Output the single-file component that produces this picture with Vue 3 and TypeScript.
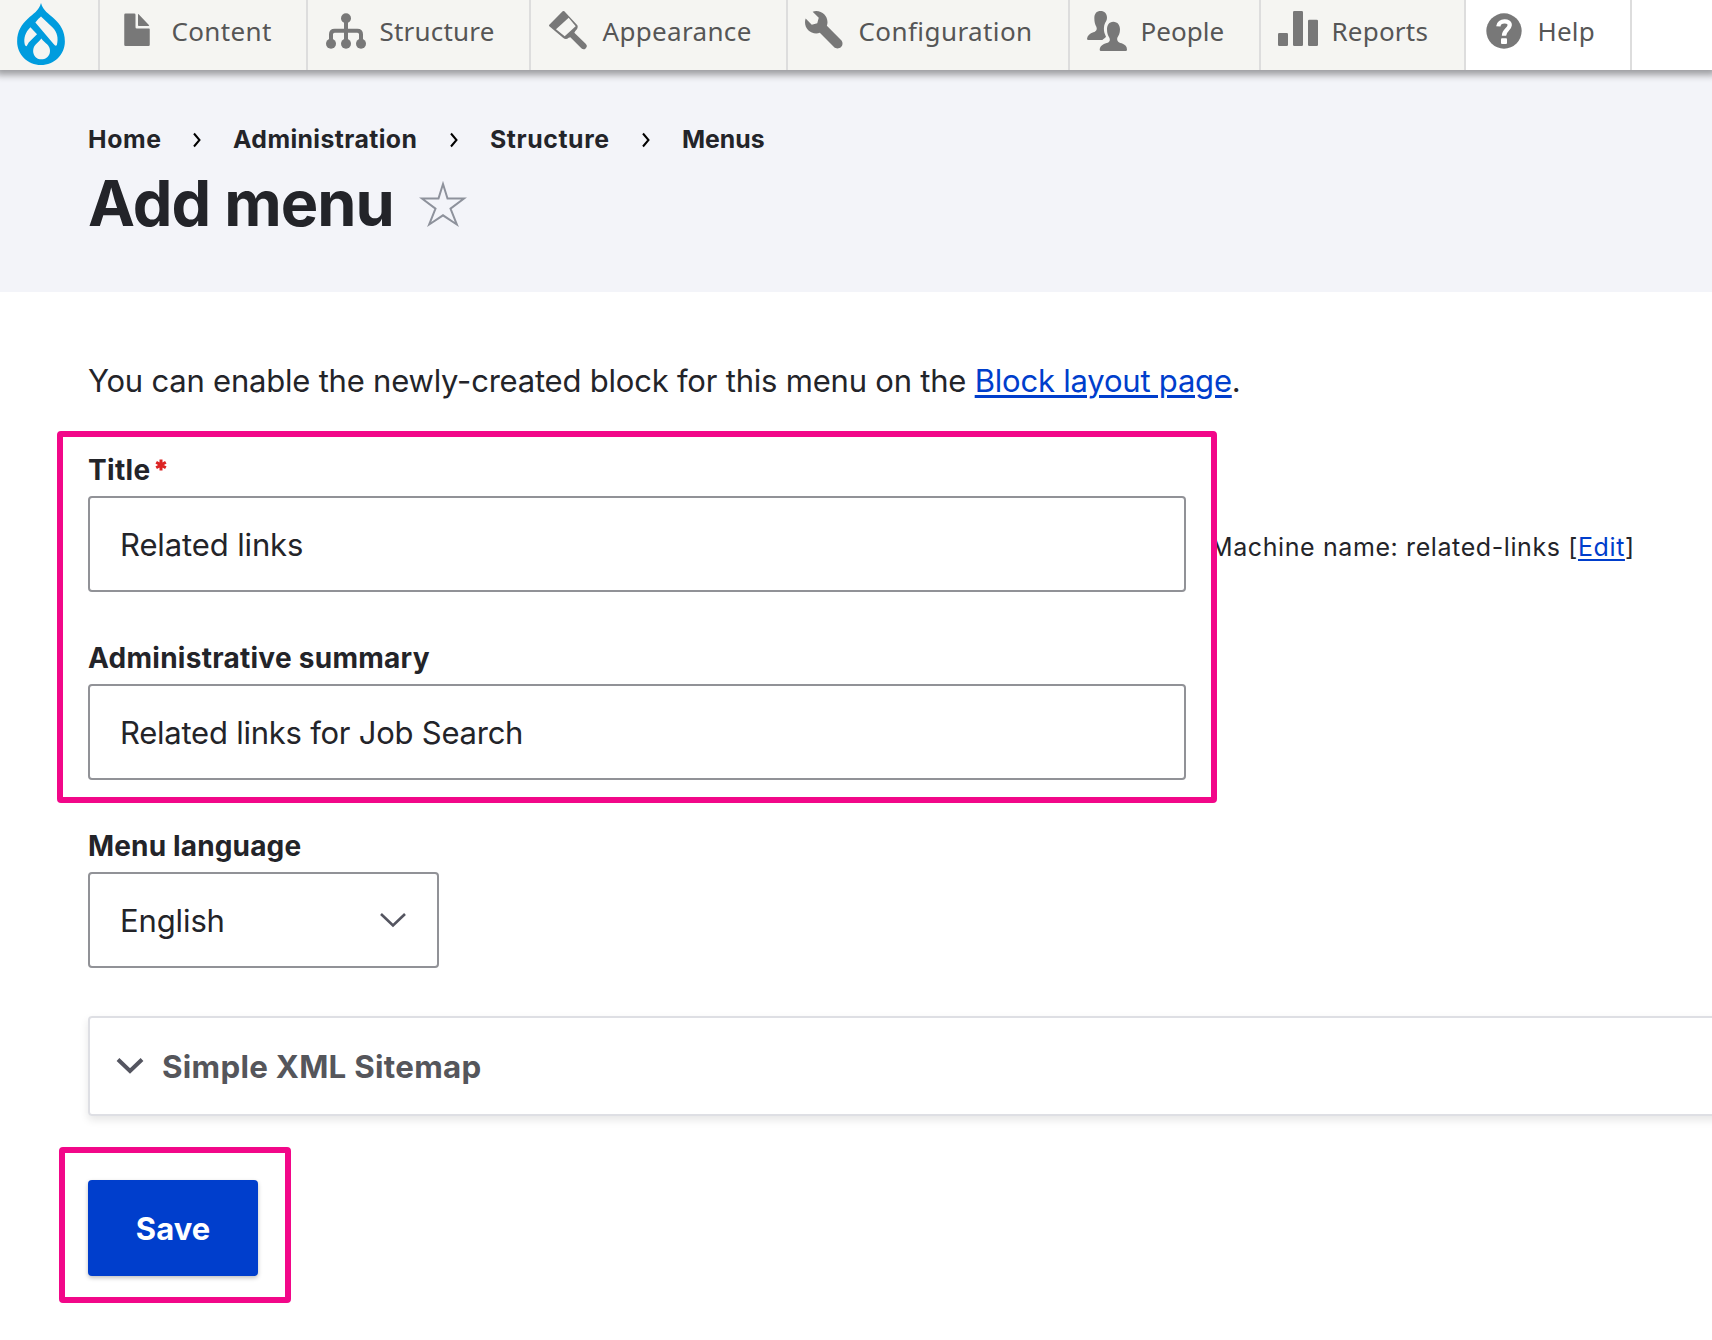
<script setup lang="ts">
import { ref } from 'vue'

type IconName = 'file' | 'tree' | 'brush' | 'wrench' | 'people' | 'bars' | 'help'

interface ToolbarItem {
  label: string
  icon: IconName
  width: number
  inset: number
  tracking: number
}

const toolbar: ToolbarItem[] = [
  { label: 'Content', icon: 'file', width: 208, inset: 18, tracking: 0.35 },
  { label: 'Structure', icon: 'tree', width: 223, inset: 18, tracking: 0.2 },
  { label: 'Appearance', icon: 'brush', width: 257, inset: 18, tracking: 0.33 },
  { label: 'Configuration', icon: 'wrench', width: 282, inset: 17, tracking: 0.42 },
  { label: 'People', icon: 'people', width: 191, inset: 17, tracking: 0.05 },
  { label: 'Reports', icon: 'bars', width: 205, inset: 17, tracking: 0.2 },
  { label: 'Help', icon: 'help', width: 166, inset: 18, tracking: 0.2 },
]

const crumbs = [
  { label: 'Home', width: 145, tracking: 0.6 },
  { label: 'Administration', width: 257, tracking: 0.4 },
  { label: 'Structure', width: 192, tracking: 0.6 },
  { label: 'Menus', width: 90, tracking: 0 },
]

const title = ref('Related links')
const summary = ref('Related links for Job Search')
</script>

<template>
  <div class="page">
    <nav class="toolbar">
      <a class="home">
        <svg class="logo" viewBox="51 8 144 187">
          <path
            fill="#009cde"
            fill-rule="evenodd"
            d="M123 8C129 32 147 40 162 55C181 73 195 92 195 124C195 164 163 195 123 195C83 195 51 164 51 124C51 92 65 73 84 55C99 40 117 32 123 8ZM123 49Q114 56 106 67L161 132Q168 140 171 134C176 114 172 96 158 82ZM91 81L111 102L86 127L80 138Q76 139 74 133C70 113 76 96 91 81ZM124 115C120 121 113 127 107 133C92 148 100 178 124 178C150 178 158 149 142 133C137 128 129 122 124 115Z"
          />
        </svg>
      </a>
      <a
        v-for="item in toolbar"
        :key="item.label"
        class="tab"
        :class="{ active: item.icon === 'help' }"
        :style="{ width: item.width + 'px', paddingLeft: item.inset + 'px' }"
      >
        <svg v-if="item.icon === 'file'" class="icon" viewBox="0 0 16 16">
          <path d="M12.5 7h-5A.5.5 0 0 1 7 6.500v-5a.5.5 0 0 0-.5-.5H3a.5.5 0 0 0-.5.5v12a.5.5 0 0 0 .5.5h9.200a.5.5 0 0 0 .5-.5v-6a.5.5 0 0 0-.2-.5zM8.400 6h3.800c.275 0 .34-.159.146-.354L8.353 1.354C8.158 1.159 8 1.225 8 1.500v4c0 .275.125.5.4.5z" />
        </svg>
        <svg v-else-if="item.icon === 'tree'" class="icon" viewBox="78 33 120 120">
          <circle cx="138" cy="55" r="15" />
          <circle cx="93" cy="131" r="15" />
          <circle cx="138" cy="131" r="15" />
          <circle cx="183" cy="131" r="15" />
          <path class="line" d="M138 55V131M93 131V103Q93 92 104 92H172Q183 92 183 103V131" />
        </svg>
        <svg v-else-if="item.icon === 'brush'" class="icon" viewBox="747 33 120 120">
          <path
            fill-rule="evenodd"
            d="M788 34Q790 32 793 34L832 76Q836 84 826 93L823 98L857 131A9.500 9.500 0 0 1 844 145L811 112L806 113Q798 121 789 113L748 79Q746 76 748 74ZM806 53L827 79L794 109L768 88Z"
          />
        </svg>
        <svg v-else-if="item.icon === 'wrench'" class="icon" viewBox="0 0 16 16">
          <path d="M14.416 11.586l-.01-.008v-.001l-5.656-5.656c.15-.449.252-.921.252-1.421 0-2.485-2.016-4.500-4.502-4.500-.505 0-.981.102-1.434.255l2.431 2.431-.588 2.196-2.196.588-2.445-2.445c-.162.464-.268.956-.268 1.475 0 2.486 2.014 4.500 4.500 4.500.5 0 .972-.102 1.421-.251l5.667 5.665c.781.781 2.047.781 2.828 0s.781-2.047 0-2.828z" />
        </svg>
        <svg v-else-if="item.icon === 'people'" class="icon" viewBox="921 33 120 120">
          <path d="M962 33C973 33 981 41 981 53C981 57 980 60 979 62C973 70 971 80 972 92C973 100 977 106 978 110C975 114 970 116 967 120H925Q921 120 921 116C922 107 930 100 940 97C950 93 952 88 949 80C945 73 943 66 943 54C943 41 950 33 962 33Z" />
          <path d="M1000 65C1013 65 1020 76 1020 88C1020 100 1016 107 1012 113C1010 122 1014 127 1025 130C1036 134 1041 140 1041 149Q1041 153 1037 153H963Q959 153 959 149C960 139 968 132 980 129C990 126 991 120 988 113C984 107 981 100 981 88C981 76 987 65 1000 65Z" />
        </svg>
        <svg v-else-if="item.icon === 'bars'" class="icon" viewBox="114 33 120 120">
          <rect x="114" y="99" width="30" height="39" rx="4" />
          <rect x="159" y="33" width="30" height="105" rx="4" />
          <rect x="204" y="59" width="30" height="79" rx="4" />
        </svg>
        <svg v-else class="icon" viewBox="732 33 120 120">
          <circle cx="792" cy="93" r="53" />
          <path class="query" d="M775 79C776 60 811 59 809 76C808 88 792 90 792 107" />
          <rect x="783" y="115" width="18" height="17" rx="3" fill="#fff" />
        </svg>
        <span class="tab-label" :style="{ letterSpacing: item.tracking + 'px' }">{{ item.label }}</span>
      </a>
    </nav>

    <header class="header">
      <ol class="crumbs">
        <li v-for="(crumb, i) in crumbs" :key="crumb.label" :style="{ width: crumb.width + 'px' }">
          <a :style="{ letterSpacing: crumb.tracking + 'px' }">{{ crumb.label }}</a>
          <svg v-if="i < crumbs.length - 1" class="sep" viewBox="0 0 10 16">
            <path d="M2 1.500L7.500 8L2 14.500" />
          </svg>
        </li>
      </ol>
      <div class="heading">
        <h1>Add menu</h1>
        <svg class="star" viewBox="0 0 48 48">
          <path d="M24 4L28.500 18.500H45L31.500 28.700L37.800 44.500L24 35.300L10.200 44.500L16.500 28.700L3 18.500H19.500Z" />
        </svg>
      </div>
    </header>

    <main class="content">
      <p class="intro">You can enable the newly-created block for this menu on the <a class="link">Block layout page</a>.</p>

      <section class="fields">
        <div class="field">
          <label class="label title-label">Title<svg class="required" viewBox="0 0 12 12">
            <path d="M6 0.500V11.500M1.200 3.200L10.800 8.800M10.800 3.200L1.200 8.800" />
          </svg></label>
          <div class="row">
            <input v-model="title" class="box" type="text" />
            <span class="machine">Machine name: related-links [<a class="link">Edit</a>]</span>
          </div>
        </div>
        <div class="field">
          <label class="label summary-label">Administrative summary</label>
          <input v-model="summary" class="box summary" type="text" />
        </div>
        <div class="mark mark-fields"></div>
      </section>

      <div class="field">
        <label class="label language-label">Menu language</label>
        <div class="box select">
          <span>English</span>
          <svg class="caret" viewBox="0 0 28 16"><path d="M2 2L14 13.500L26 2" /></svg>
        </div>
      </div>

      <div class="details">
        <svg class="disclosure" viewBox="0 0 28 18"><path d="M2 2.500L14 14L26 2.500" /></svg>
        <span class="details-title">Simple XML Sitemap</span>
      </div>

      <div class="actions">
        <button class="save" type="button">Save</button>
        <div class="mark mark-save"></div>
      </div>
    </main>
  </div>
</template>

<style>
body {
  margin: 0;
  background: #fff;
}
</style>

<style scoped>
.page {
  width: 1712px;
  height: 1340px;
  overflow: hidden;
  background: #fff;
  color: #232429;
  font-family: Inter, "Liberation Sans", sans-serif;
}

.toolbar {
  position: relative;
  display: flex;
  height: 70px;
  background: #fff;
  box-shadow: 0 1px 7px 4px rgba(0, 0, 0, 0.36);
  font-family: "Noto Sans", "Open Sans", sans-serif;
}

.home,
.tab {
  box-sizing: border-box;
  flex: none;
  display: flex;
  align-items: flex-start;
  border-right: 2px solid #ddd;
  background: #f5f5f2;
}

.home {
  width: 100px;
  padding: 3px 0 0 17px;
}

.logo {
  width: 48px;
  height: 62px;
}

.tab {
  gap: 13.5px;
  color: #565656;
  font-size: 26px;
  line-height: 62px;
}

.tab.active {
  background: #fff;
}

.tab-label {
  white-space: nowrap;
}

.icon {
  flex: none;
  width: 40px;
  height: 40px;
  margin-top: 11px;
  fill: #787878;
}

.line {
  fill: none;
  stroke: #787878;
  stroke-width: 12;
}

.query {
  fill: none;
  stroke: #fff;
  stroke-width: 13;
}

.header {
  box-sizing: border-box;
  height: 222px;
  padding: 49px 88px 0;
  background: #f3f4f9;
}

.crumbs {
  display: flex;
  height: 40px;
  margin: 0 0 4px;
  padding: 0;
  list-style: none;
  font-size: 24.8px;
  font-weight: 700;
  line-height: 40px;
}

.crumbs li {
  box-sizing: border-box;
  flex: none;
  display: flex;
  align-items: center;
  justify-content: space-between;
  padding-right: 31px;
  white-space: nowrap;
}

.sep {
  flex: none;
  width: 10px;
  height: 16px;
  margin-top: 1px;
  fill: none;
  stroke: #000;
  stroke-width: 2;
}

.heading {
  display: flex;
  height: 80px;
}

h1 {
  margin: 0;
  width: 331px;
  font-size: 63px;
  font-weight: 700;
  line-height: 81px;
  letter-spacing: -0.95px;
  white-space: nowrap;
}

.star {
  width: 48px;
  height: 48px;
  margin-top: 17px;
  fill: none;
  stroke: #8e929c;
  stroke-width: 2;
}

.content {
  padding: 64px 0 0 88px;
}

.intro {
  height: 50px;
  margin: 0 0 44px;
  font-size: 31px;
  line-height: 50px;
  letter-spacing: -0.21px;
  white-space: nowrap;
}

.link {
  color: #003ecc;
  text-decoration: underline;
  text-decoration-thickness: 3px;
  text-underline-offset: 3px;
}

.fields {
  position: relative;
}

.field {
  margin-bottom: 46px;
}

.label {
  display: block;
  height: 40px;
  margin-bottom: 6px;
  font-size: 28px;
  font-weight: 700;
  line-height: 40px;
}

.title-label {
  letter-spacing: 0.3px;
}

.summary-label {
  letter-spacing: 0.27px;
}

.language-label {
  letter-spacing: 0.15px;
}

.required {
  width: 12px;
  height: 12px;
  margin-left: 5px;
  vertical-align: 9px;
  fill: none;
  stroke: #dc2323;
  stroke-width: 3;
}

.row {
  display: flex;
  align-items: center;
  gap: 24px;
}

.box {
  box-sizing: border-box;
  display: block;
  width: 1098px;
  height: 96px;
  padding: 1px 30px 0;
  border: 2px solid #919297;
  border-radius: 4px;
  outline: none;
  background: #fff;
  color: #232429;
  font-family: inherit;
  font-size: 31px;
  letter-spacing: -0.12px;
}

.summary {
  letter-spacing: -0.24px;
}

.machine {
  padding-top: 5px;
  font-size: 25px;
  line-height: 40px;
  letter-spacing: 0.6px;
  white-space: nowrap;
}

.machine .link {
  text-decoration-thickness: 2px;
}

.select {
  display: flex;
  align-items: center;
  justify-content: space-between;
  width: 351px;
}

.caret {
  width: 28px;
  height: 16px;
  margin-bottom: 2px;
  fill: none;
  stroke: #545560;
  stroke-width: 2.6;
}

.details {
  box-sizing: border-box;
  display: flex;
  align-items: center;
  gap: 18px;
  width: 1700px;
  height: 100px;
  margin-top: 48px;
  padding-left: 26px;
  border: 2px solid #dedfe4;
  border-radius: 4px;
  box-shadow: 0 4px 8px rgba(0, 0, 0, 0.1);
  color: #55565b;
  font-size: 31.3px;
  font-weight: 700;
  letter-spacing: 0.28px;
}

.details-title {
  padding-top: 2px;
}

.disclosure {
  width: 28px;
  height: 18px;
  fill: none;
  stroke: #545560;
  stroke-width: 4;
}

.actions {
  position: relative;
  margin-top: 64px;
}

.save {
  display: block;
  width: 170px;
  height: 96px;
  padding: 0;
  border: 0;
  border-radius: 4px;
  background: #003ecc;
  box-shadow: 0 2px 4px rgba(0, 0, 0, 0.25);
  color: #fff;
  font-family: inherit;
  font-size: 31px;
  font-weight: 700;
}

/* Highlight frames drawn over the form */
.mark {
  position: absolute;
  box-sizing: border-box;
  border: 6px solid #f20789;
  border-radius: 4px;
  pointer-events: none;
}

.mark-fields {
  top: -19px;
  left: -31px;
  width: 1160px;
  height: 372px;
}

.mark-save {
  top: -33px;
  left: -29px;
  width: 232px;
  height: 156px;
}
</style>
